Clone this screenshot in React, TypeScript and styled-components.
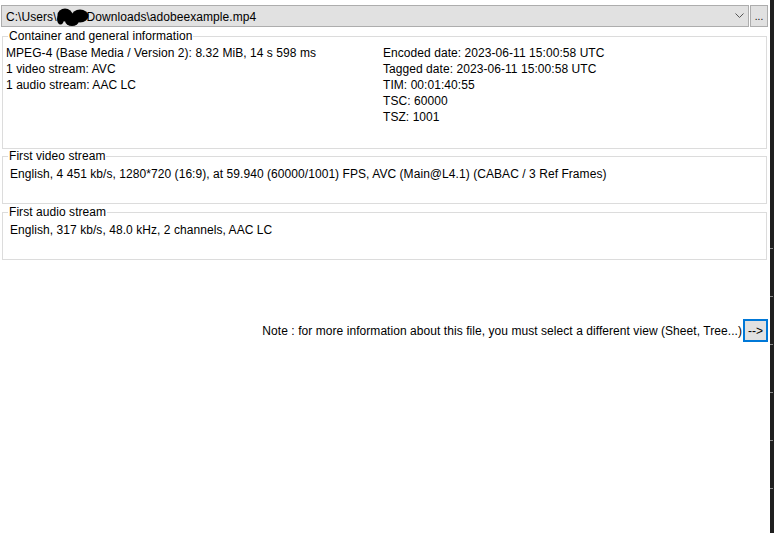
import styled, { createGlobalStyle } from "styled-components";

const GlobalStyle = createGlobalStyle`
  html, body, #root {
    margin: 0;
    height: 100%;
  }
  body {
    background: #ffffff;
    font-family: "Liberation Sans", Arial, sans-serif;
    font-size: 12px;
    letter-spacing: 0.06px;
    color: #000;
  }
`;

const Page = styled.div`
  display: flex;
  height: 100vh;
  overflow: hidden;
`;

const Main = styled.div`
  flex: 1;
  display: flex;
  flex-direction: column;
  background: #ffffff;
`;

const Edge = styled.div`
  width: 4px;
  background: #1f1f1f;
  display: flex;
  flex-direction: column;
  gap: 47px;
  padding-top: 248px;
`;

const Tick = styled.div`
  height: 1px;
  width: 3px;
  background: #8a8a8a;
`;

const TopBar = styled.div`
  display: flex;
  gap: 1px;
  padding: 5px 2px 0 1px;
`;

const Combo = styled.div`
  flex: 1;
  height: 22px;
  box-sizing: border-box;
  border: 1px solid #adadad;
  background: #e1e1e1;
  display: flex;
  align-items: center;
  padding: 2px 0 0 4px;
  white-space: nowrap;
`;

const Path = styled.span`
  display: inline-flex;
  align-items: center;
`;

const Redact = styled.span`
  position: relative;
  z-index: 1;
  display: inline-block;
  width: 34px;
  height: 20px;
  margin: 0 -3px 0 -1px;
  svg {
    display: block;
  }
`;

const Chevron = styled.svg`
  margin-left: auto;
  margin-right: 4px;
  margin-top: -2px;
`;

const Button = styled.button<{ $focused?: boolean }>`
  box-sizing: border-box;
  margin: 0;
  height: ${(p) => (p.$focused ? "23px" : "22px")};
  width: ${(p) => (p.$focused ? "25px" : "18px")};
  padding: ${(p) => (p.$focused ? "0" : "2px 0 0")};
  background: #e1e1e1;
  border: ${(p) => (p.$focused ? "2px solid #0078d7" : "1px solid #adadad")};
  font-family: "Liberation Sans", Arial, sans-serif;
  font-size: ${(p) => (p.$focused ? "12px" : "10px")};
  color: #000;
  line-height: 1;
  display: flex;
  align-items: center;
  justify-content: center;
`;

const Group = styled.div<{ $height: number; $gap: number }>`
  box-sizing: border-box;
  margin: ${(p) => p.$gap}px 3px 0 2px;
  height: ${(p) => p.$height}px;
  border: 1px solid #dcdcdc;
  display: flex;
  flex-direction: column;
`;

const Legend = styled.div`
  align-self: flex-start;
  margin: -8px 0 0 5px;
  padding: 0 1px;
  background: #ffffff;
  line-height: 14px;
`;

const Body = styled.div<{ $indent: number; $top: number }>`
  padding: ${(p) => p.$top}px 0 0 ${(p) => p.$indent}px;
  line-height: 16px;
  white-space: nowrap;
`;

const Columns = styled.div`
  display: grid;
  grid-template-columns: 377px 1fr;
`;

const NoteRow = styled.div`
  margin-top: 59px;
  padding-right: 2px;
  display: flex;
  justify-content: flex-end;
  align-items: center;
  gap: 1px;
`;

const NoteText = styled.span`
  white-space: nowrap;
`;

function Blob() {
  return (
    <Redact>
      <svg width="34" height="20" viewBox="0 0 34 20">
        <g fill="#000">
          <ellipse cx="9" cy="8" rx="7.5" ry="6.5" />
          <ellipse cx="24" cy="9" rx="8.5" ry="6.5" />
          <ellipse cx="16" cy="13.5" rx="7" ry="5.5" />
          <ellipse cx="4.5" cy="12" rx="3.5" ry="5.5" />
        </g>
      </svg>
    </Redact>
  );
}

export default function App() {
  return (
    <Page>
      <GlobalStyle />
      <Main>
        <TopBar>
          <Combo>
            <Path>
              <span>C:\Users\</span>
              <Blob />
              <span>Downloads\adobeexample.mp4</span>
            </Path>
            <Chevron width="9" height="6" viewBox="0 0 9 6">
              <polyline
                points="0.5,0.5 4.5,4.5 8.5,0.5"
                fill="none"
                stroke="#555"
                strokeWidth="1"
              />
            </Chevron>
          </Combo>
          <Button>...</Button>
        </TopBar>

        <Group $height={113} $gap={9}>
          <Legend>Container and general information</Legend>
          <Body $indent={3} $top={2}>
            <Columns>
              <div>
                <div>MPEG-4 (Base Media / Version 2): 8.32 MiB, 14 s 598 ms</div>
                <div>1 video stream: AVC</div>
                <div>1 audio stream: AAC LC</div>
              </div>
              <div>
                <div>Encoded date: 2023-06-11 15:00:58 UTC</div>
                <div>Tagged date: 2023-06-11 15:00:58 UTC</div>
                <div>TIM: 00:01:40:55</div>
                <div>TSC: 60000</div>
                <div>TSZ: 1001</div>
              </div>
            </Columns>
          </Body>
        </Group>

        <Group $height={48} $gap={7}>
          <Legend>First video stream</Legend>
          <Body $indent={7} $top={3}>
            English, 4 451 kb/s, 1280*720 (16:9), at 59.940 (60000/1001) FPS, AVC
            (Main@L4.1) (CABAC / 3 Ref Frames)
          </Body>
        </Group>

        <Group $height={48} $gap={8}>
          <Legend>First audio stream</Legend>
          <Body $indent={7} $top={3}>
            English, 317 kb/s, 48.0 kHz, 2 channels, AAC LC
          </Body>
        </Group>

        <NoteRow>
          <NoteText>
            Note : for more information about this file, you must select a
            different view (Sheet, Tree...)
          </NoteText>
          <Button $focused>--&gt;</Button>
        </NoteRow>
      </Main>
      <Edge>
        {[0, 1, 2, 3, 4, 5].map((i) => (
          <Tick key={i} />
        ))}
      </Edge>
    </Page>
  );
}
